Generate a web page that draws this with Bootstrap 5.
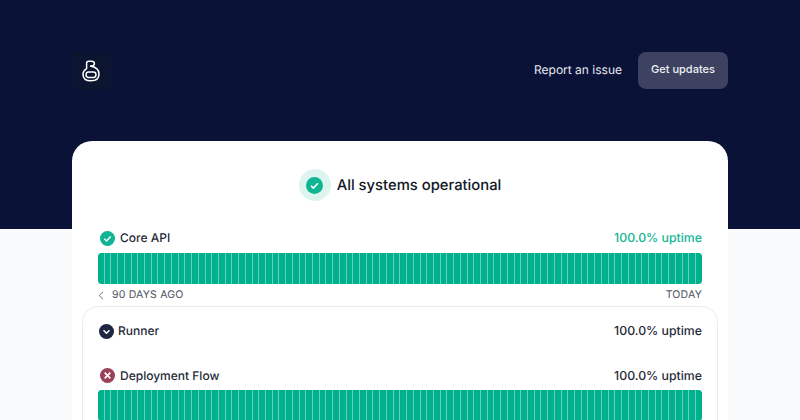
<!DOCTYPE html>
<html lang="en">

<head>
    <meta charset="UTF-8">
    <meta name="viewport" content="width=device-width, initial-scale=1.0">
    <title>Status</title>
    <link href="https://cdn.jsdelivr.net/npm/bootstrap@5.3.3/dist/css/bootstrap.min.css" rel="stylesheet">
    <style>
        html, body {
            height: 420px;
            overflow: hidden;
        }

        body {
            background-color: #f8fafc;
            font-family: Inter, "Liberation Sans", sans-serif;
            color: #111827;
            text-rendering: geometricPrecision;
        }

        .top-band {
            background-color: #0b1238;
            height: 229px;
            padding: 52px 72px 0;
        }

        .logo-box {
            width: 38px;
            height: 38px;
            background-color: #0b152f;
        }

        .report-link {
            color: #e8eaf0;
            font-size: 12px;
            text-decoration: none;
            padding-bottom: 2px;
        }

        .updates-btn {
            background-color: #3c4260;
            color: #eef0f5;
            font-size: 11px;
            font-weight: 500;
            width: 90px;
            height: 37px;
            border: 0;
            border-radius: 8px;
            padding: 0 0 2px;
        }

        .main-panel {
            background-color: #fff;
            border-radius: 20px 20px 0 0;
            margin: -88px 72px 0;
            height: 279px;
            padding: 28px 26px 0;
        }

        .title-ring {
            width: 32px;
            height: 32px;
            border-radius: 50%;
            background-color: #def5ef;
        }

        .title-row {
            gap: 6px;
            margin-bottom: 28px;
        }

        .page-title {
            font-size: 14.8px;
            font-weight: 500;
            margin: 0;
            padding-top: 2px;
        }

        .comp-name {
            font-size: 12px;
            font-weight: 500;
            color: #1f2937;
        }

        .comp-uptime {
            font-size: 12.3px;
            font-weight: 500;
            color: #1f2937;
        }

        .uptime-ok {
            color: #10b594;
        }

        .status-icon {
            margin-left: 2px;
            margin-right: 1px;
        }

        .runner-icon {
            margin-left: 1px;
        }

        .bar-head {
            margin-bottom: 6px;
        }

        .day-bar {
            height: 31px;
            gap: 1px;
            border-radius: 4px;
            overflow: hidden;
            background-color: #66d0ba;
        }

        .day-bar span {
            flex: 1 1 0;
            background-color: #00b18f;
        }

        .axis-label {
            font-size: 10.5px;
            color: #4b5563;
            letter-spacing: .2px;
            margin-top: 3px;
        }

        .group-box {
            border: 1px solid #e9ebef;
            border-radius: 16px 16px 0 0;
            margin: 3px -16px 0;
            padding: 15px 15px 0;
            height: 130px;
        }

        .runner-row {
            margin-bottom: 26px;
        }

        .flow-head {
            margin-bottom: 5px;
        }
    </style>
</head>

<body>
    <div class="top-band d-flex justify-content-between align-items-start">
        <div class="logo-box d-flex align-items-center justify-content-center">
            <svg width="18" height="22" viewBox="0 0 18 22" fill="none" stroke="#fff" stroke-width="1.5">
                <path d="M4.6 9V3.2C4.6 2 5.4 1.2 6.6 1.2H9.8C11.4 1.2 12.4 2.2 12.4 3.6C12.4 5 11.4 6 9.8 6H8.2" />
                <path d="M8.2 6C13.4 6.8 17 9.4 17 14C17 18.4 13.8 20.8 9 20.8C4.2 20.8 1 18.4 1 14.2C1 11.6 2.4 10 4.6 9" />
                <rect x="4" y="12" width="10" height="5.4" rx="2.7" />
            </svg>
        </div>
        <div class="d-flex align-items-center">
            <a href="#" class="report-link me-3">Report an issue</a>
            <button class="updates-btn" type="button">Get updates</button>
        </div>
    </div>

    <div class="main-panel">
        <div class="title-row d-flex justify-content-center align-items-center">
            <div class="title-ring d-flex align-items-center justify-content-center">
                <svg width="17" height="17" viewBox="0 0 16 16">
                    <circle cx="8" cy="8" r="8" fill="#10b594" />
                    <path d="M4.8 8.3 7 10.4 11.2 5.9" fill="none" stroke="#fff" stroke-width="1.5" />
                </svg>
            </div>
            <h1 class="page-title">All systems operational</h1>
        </div>

        <div class="bar-head d-flex justify-content-between align-items-center">
            <div class="d-flex align-items-center gap-1">
                <svg class="status-icon" width="15" height="15" viewBox="0 0 16 16">
                    <circle cx="8" cy="8" r="8" fill="#10b594" />
                    <path d="M4.6 8.3 7 10.6 11.4 5.8" fill="none" stroke="#fff" stroke-width="1.6" />
                </svg>
                <span class="comp-name">Core API</span>
            </div>
            <span class="comp-uptime uptime-ok">100.0% uptime</span>
        </div>
        <div class="day-bar d-flex"></div>
        <div class="axis-label d-flex justify-content-between">
            <span><svg class="me-2" width="6" height="9" viewBox="0 0 6 9" fill="none" stroke="#6b7280" stroke-width="1"><path d="M5 .8 1.2 4.5 5 8.2" /></svg>90 DAYS AGO</span>
            <span>TODAY</span>
        </div>

        <div class="group-box">
            <div class="runner-row d-flex justify-content-between align-items-center">
                <div class="d-flex align-items-center gap-1">
                    <svg class="runner-icon" width="15" height="15" viewBox="0 0 16 16">
                        <circle cx="8" cy="8" r="8" fill="#1e2640" />
                        <path d="M4.8 6.6 8 9.8 11.2 6.6" fill="none" stroke="#fff" stroke-width="1.6" />
                    </svg>
                    <span class="comp-name">Runner</span>
                </div>
                <span class="comp-uptime">100.0% uptime</span>
            </div>
            <div class="flow-head d-flex justify-content-between align-items-center">
                <div class="d-flex align-items-center gap-1">
                    <svg class="status-icon" width="15" height="15" viewBox="0 0 16 16">
                        <circle cx="8" cy="8" r="8" fill="#9b4258" />
                        <path d="M5 5 11 11M11 5 5 11" fill="none" stroke="#fff" stroke-width="1.8" />
                    </svg>
                    <span class="comp-name">Deployment Flow</span>
                </div>
                <span class="comp-uptime">100.0% uptime</span>
            </div>
            <div class="day-bar d-flex"></div>
        </div>
    </div>

    <script>
        // 90 day segments per bar
        document.querySelectorAll(".day-bar").forEach(function (bar) {
            for (let i = 0; i < 90; i++) {
                bar.appendChild(document.createElement("span"));
            }
        });
    </script>
</body>

</html>
